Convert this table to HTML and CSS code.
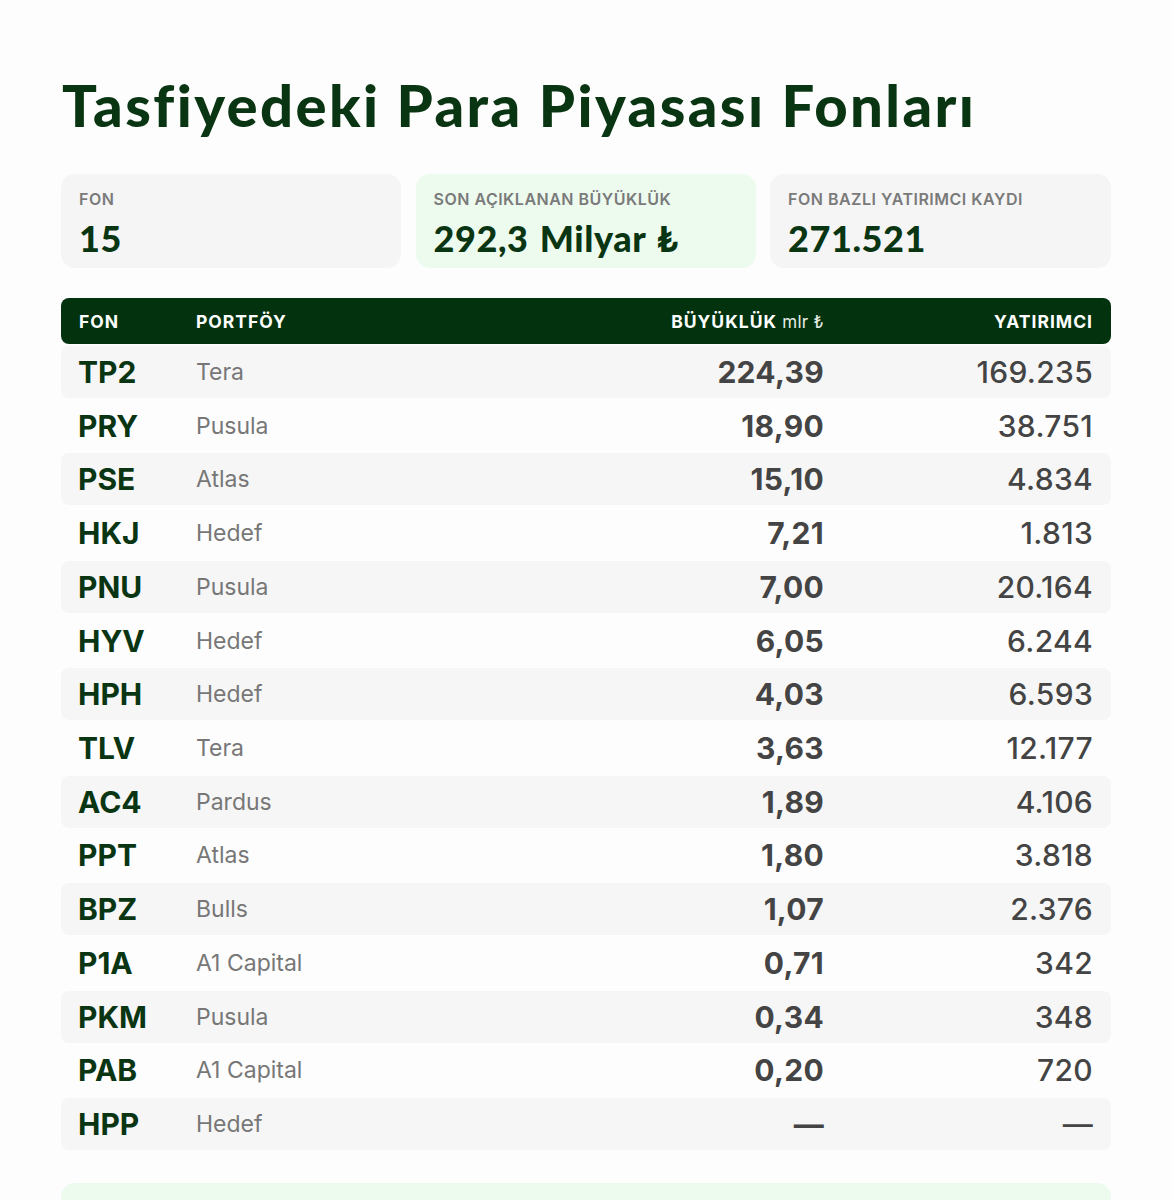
FILE: index.html
```html
<!DOCTYPE html>
<html lang="tr">
<head>
<meta charset="utf-8">
<link rel="stylesheet" href="styles.css">
</head>
<body>
<main class="page">
  <h1 class="title">Tasfiyedeki Para Piyasası Fonları</h1>
  <section class="stats">
    <div class="stat">
      <div class="stat-label">FON</div>
      <div class="stat-value">15</div>
    </div>
    <div class="stat stat-green">
      <div class="stat-label">SON AÇIKLANAN BÜYÜKLÜK</div>
      <div class="stat-value">292,3 Milyar ₺</div>
    </div>
    <div class="stat">
      <div class="stat-label">FON BAZLI YATIRIMCI KAYDI</div>
      <div class="stat-value">271.521</div>
    </div>
  </section>
  <section class="table">
    <div class="thead">
      <div class="c-code">FON</div>
      <div class="c-port">PORTFÖY</div>
      <div class="c-size">BÜYÜKLÜK <span class="unit">mlr ₺</span></div>
      <div class="c-inv">YATIRIMCI</div>
    </div>
    <div class="tbody">
      <div class="row alt"><div class="c-code">TP2</div><div class="c-port">Tera</div><div class="c-size">224,39</div><div class="c-inv">169.235</div></div>
      <div class="row"><div class="c-code">PRY</div><div class="c-port">Pusula</div><div class="c-size">18,90</div><div class="c-inv">38.751</div></div>
      <div class="row alt"><div class="c-code">PSE</div><div class="c-port">Atlas</div><div class="c-size">15,10</div><div class="c-inv">4.834</div></div>
      <div class="row"><div class="c-code">HKJ</div><div class="c-port">Hedef</div><div class="c-size">7,21</div><div class="c-inv">1.813</div></div>
      <div class="row alt"><div class="c-code">PNU</div><div class="c-port">Pusula</div><div class="c-size">7,00</div><div class="c-inv">20.164</div></div>
      <div class="row"><div class="c-code">HYV</div><div class="c-port">Hedef</div><div class="c-size">6,05</div><div class="c-inv">6.244</div></div>
      <div class="row alt"><div class="c-code">HPH</div><div class="c-port">Hedef</div><div class="c-size">4,03</div><div class="c-inv">6.593</div></div>
      <div class="row"><div class="c-code">TLV</div><div class="c-port">Tera</div><div class="c-size">3,63</div><div class="c-inv">12.177</div></div>
      <div class="row alt"><div class="c-code">AC4</div><div class="c-port">Pardus</div><div class="c-size">1,89</div><div class="c-inv">4.106</div></div>
      <div class="row"><div class="c-code">PPT</div><div class="c-port">Atlas</div><div class="c-size">1,80</div><div class="c-inv">3.818</div></div>
      <div class="row alt"><div class="c-code">BPZ</div><div class="c-port">Bulls</div><div class="c-size">1,07</div><div class="c-inv">2.376</div></div>
      <div class="row"><div class="c-code">P1A</div><div class="c-port">A1 Capital</div><div class="c-size">0,71</div><div class="c-inv">342</div></div>
      <div class="row alt"><div class="c-code">PKM</div><div class="c-port">Pusula</div><div class="c-size">0,34</div><div class="c-inv">348</div></div>
      <div class="row"><div class="c-code">PAB</div><div class="c-port">A1 Capital</div><div class="c-size">0,20</div><div class="c-inv">720</div></div>
      <div class="row alt"><div class="c-code">HPP</div><div class="c-port">Hedef</div><div class="c-size">—</div><div class="c-inv">—</div></div>
    </div>
  </section>
  <section class="note"></section>
</main>
</body>
</html>
```
FILE: styles.css
```css
html, body {
  margin: 0;
  padding: 0;
  background: #fdfdfd;
}
body {
  font-family: "Inter", "Liberation Sans", sans-serif;
  color: #444;
}
.page {
  width: 1050px;
  margin-left: 61px;
  padding-top: 70px;
}
.title {
  margin: 0;
  font-family: "Lato", "Inter", sans-serif;
  font-weight: 900;
  font-size: 58px;
  line-height: 70px;
  color: #0a3513;
  letter-spacing: 2.4px;
  padding-left: 1px;
}
.stats {
  margin-top: 34px;
  display: grid;
  grid-template-columns: 340px 340px 341px;
  column-gap: 14.5px;
}
.stat {
  height: 94px;
  box-sizing: border-box;
  background: #f5f5f6;
  border-radius: 14px;
  padding: 15px 18px 0;
}
.stat-green {
  background: #edfbee;
}
.stat-label {
  font-size: 16px;
  font-weight: 600;
  color: #7a7a7a;
  line-height: 20px;
  letter-spacing: 0.5px;
}
.stat-value {
  margin-top: 9px;
  font-family: "Lato", "Inter", sans-serif;
  font-weight: 900;
  font-size: 36px;
  line-height: 40px;
  color: #0a3513;
  letter-spacing: 0.6px;
  word-spacing: 2px;
}
.table {
  margin-top: 30px;
}
.thead {
  height: 46px;
  background: #02330e;
  border-radius: 8px;
  color: #fff;
  font-weight: 700;
  font-size: 17.5px;
  letter-spacing: 1px;
  display: grid;
  grid-template-columns: 117px 1fr 260px 269px;
  align-items: center;
  padding: 0 18px;
}
.unit {
  font-weight: 400;
  font-size: 17px;
  letter-spacing: 0.3px;
  word-spacing: 0;
  color: #e6ece6;
}
.tbody {
  margin-top: 2px;
  display: flex;
  flex-direction: column;
  gap: 1.72px;
}
.row {
  height: 52px;
  display: grid;
  grid-template-columns: 117px 1fr 260px 269px;
  align-items: center;
  padding: 0 18px;
  border-radius: 8px;
}
.row.alt {
  background: #f6f6f6;
}
.c-size, .c-inv {
  text-align: right;
}
.row .c-code {
  font-weight: 700;
  font-size: 30px;
  color: #0a3513;
  margin-left: -1px;
}
.row .c-port {
  font-size: 23px;
  color: #777;
}
.row .c-size {
  font-weight: 700;
  font-size: 30px;
  letter-spacing: 0.3px;
  color: #444;
}
.row .c-inv {
  font-size: 30px;
  font-weight: 450;
  letter-spacing: 0.3px;
  color: #444;
}
.note {
  margin-top: 33px;
  height: 60px;
  background: #edfbee;
  border-radius: 14px;
}
```
